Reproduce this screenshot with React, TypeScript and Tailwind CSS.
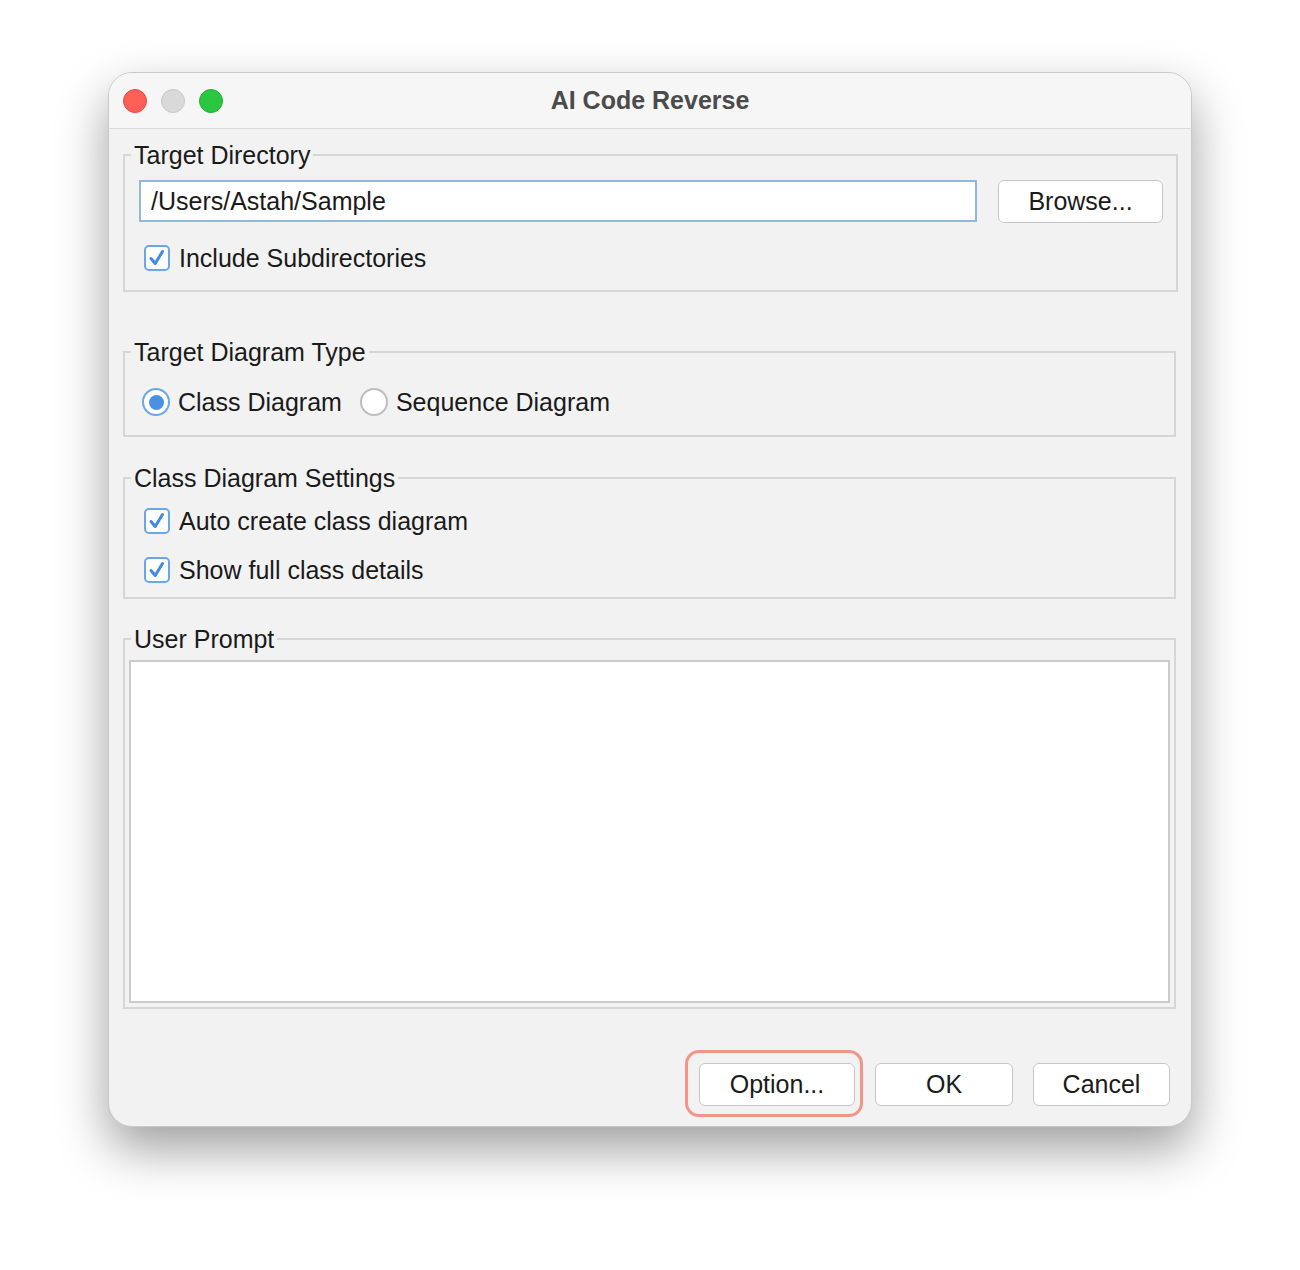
import { useState } from "react";

const font = "font-['Liberation_Sans','Helvetica_Neue',Arial,sans-serif]";

function CheckBox({ checked, label }: { checked: boolean; label: string }) {
  return (
    <label className="flex items-center gap-[9px] cursor-default select-none">
      <span className="flex h-[26px] w-[26px] items-center justify-center rounded-[5px] border-2 border-[#6aa6ea] bg-white">
        {checked && (
          <svg width="20" height="20" viewBox="0 0 20 20" fill="none">
            <path
              d="M4 10.5 L8.2 15.5 L15.5 3.5"
              stroke="#3f8ae3"
              strokeWidth="3"
              strokeLinecap="round"
              strokeLinejoin="round"
            />
          </svg>
        )}
      </span>
      <span className="text-[25px] leading-[30px] text-[#1a1a1a]">{label}</span>
    </label>
  );
}

function Radio({ selected, label, onClick }: { selected: boolean; label: string; onClick: () => void }) {
  return (
    <label className="flex items-center gap-[8px] cursor-default select-none" onClick={onClick}>
      <span
        className={
          selected
            ? "flex h-[28px] w-[28px] items-center justify-center rounded-full border-2 border-[#6aa6ea] bg-white"
            : "flex h-[28px] w-[28px] items-center justify-center rounded-full border-2 border-[#bdbdbd] bg-white"
        }
      >
        {selected && <span className="h-[15px] w-[15px] rounded-full bg-[#4a90e2]" />}
      </span>
      <span className="text-[25px] leading-[30px] text-[#1a1a1a]">{label}</span>
    </label>
  );
}

function Group({ title, className, children }: { title: string; className: string; children: React.ReactNode }) {
  return (
    <fieldset className={"border-2 border-[#d6d6d6] " + className}>
      <legend className="ml-[6px] px-[3px] text-[25px] leading-[30px] text-[#1a1a1a]">{title}</legend>
      {children}
    </fieldset>
  );
}

function Button({ children, className }: { children: React.ReactNode; className: string }) {
  return (
    <button
      className={
        "h-[43px] rounded-[6px] border-[1.5px] border-[#c6c6c6] bg-white text-[25px] leading-none text-[#1a1a1a] " +
        className
      }
    >
      {children}
    </button>
  );
}

export default function App() {
  const [diagram, setDiagram] = useState("class");
  const [path, setPath] = useState("/Users/Astah/Sample");

  return (
    <div className={"min-h-[1270px] w-[1300px] bg-white pl-[108px] pt-[72px] " + font}>
      <div className="flex h-[1055px] w-[1084px] flex-col overflow-hidden rounded-[24px] border border-[#c9c9c9] bg-[#f2f2f2] shadow-[0_22px_50px_rgba(0,0,0,0.38)]">
        {/* title bar */}
        <div className="grid h-[56px] shrink-0 grid-cols-[1fr_auto_1fr] items-center border-b border-[#dadada] bg-[#f6f6f6] px-[14px]">
          <div className="flex items-center gap-[14px]">
            <span className="h-[24px] w-[24px] rounded-full border border-[#e5493f] bg-[#fe5f57]" />
            <span className="h-[24px] w-[24px] rounded-full border border-[#c7c7c7] bg-[#d9d9d9]" />
            <span className="h-[24px] w-[24px] rounded-full border border-[#22ad36] bg-[#2ac840]" />
          </div>
          <div className="text-[25px] font-bold text-[#4b4b4b]">AI Code Reverse</div>
          <div />
        </div>

        {/* body */}
        <div className="flex flex-1 flex-col pl-[14px] pr-[15px] pt-[11px]">
          <Group title="Target Directory" className="pb-[17px]">
            <div className="mt-[10px] flex gap-[21px] pl-[14px] pr-[13px]">
              <input
                value={path}
                onChange={(e) => setPath(e.target.value)}
                className="h-[42px] w-[838px] border-2 border-[#93b6dc] bg-white px-[10px] text-[25px] text-[#1a1a1a] outline-none"
              />
              <Button className="w-[165px]">Browse...</Button>
            </div>
            <div className="mt-[20px] pl-[19px]">
              <CheckBox checked label="Include Subdirectories" />
            </div>
          </Group>

          <Group title="Target Diagram Type" className="mt-[45px] pb-[18px]">
            <div className="mt-[20px] flex items-center gap-[18px] pl-[17px]">
              <Radio selected={diagram === "class"} label="Class Diagram" onClick={() => setDiagram("class")} />
              <Radio
                selected={diagram === "sequence"}
                label="Sequence Diagram"
                onClick={() => setDiagram("sequence")}
              />
            </div>
          </Group>

          <Group title="Class Diagram Settings" className="mt-[26px] pb-[12px]">
            <div className="mt-[13px] flex flex-col gap-[19px] pl-[19px]">
              <CheckBox checked label="Auto create class diagram" />
              <CheckBox checked label="Show full class details" />
            </div>
          </Group>

          <Group title="User Prompt" className="mt-[25px] pb-[4px]">
            <div className="px-[4px]">
              <textarea className="mt-[6px] block h-[343px] w-full resize-none border-2 border-[#cbcbcb] bg-white outline-none" />
            </div>
          </Group>

          <div className="mt-[54px] flex justify-end gap-[20px] pr-[6px]">
            <div className="relative">
              <span className="pointer-events-none absolute -bottom-[11px] -left-[14px] -right-[8px] -top-[13px] rounded-[14px] border-[3px] border-[#f3948b]" />
              <Button className="w-[156px]">Option...</Button>
            </div>
            <Button className="w-[138px]">OK</Button>
            <Button className="w-[137px]">Cancel</Button>
          </div>
        </div>
      </div>
    </div>
  );
}
